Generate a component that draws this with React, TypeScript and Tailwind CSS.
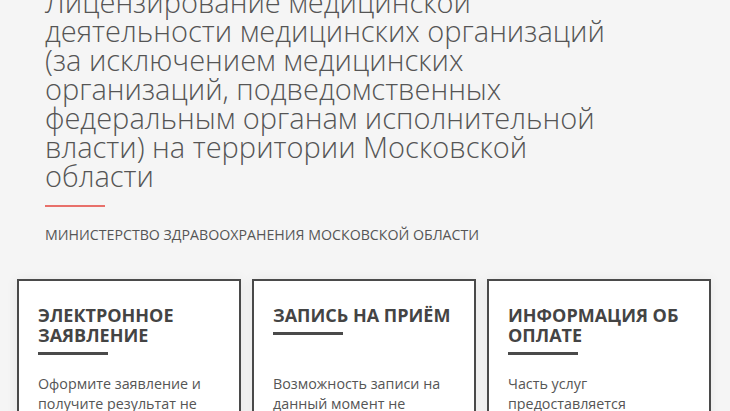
import React from "react";

const cards = [
  {
    title: "Электронное заявление",
    text: "Оформите заявление и получите результат не выходя из дома",
  },
  {
    title: "Запись на приём",
    text: "Возможность записи на данный момент не предоставляется",
  },
  {
    title: "Информация об оплате",
    text: "Часть услуг предоставляется бесплатно",
  },
];

const titleLines = [
  "Лицензирование медицинской",
  "деятельности медицинских организаций",
  "(за исключением медицинских",
  "организаций, подведомственных",
  "федеральным органам исполнительной",
  "власти) на территории Московской",
  "области",
];

export default function App() {
  return (
    <div
      className="h-[411px] w-[730px] overflow-hidden bg-[#f5f5f5]"
      style={{ fontFamily: '"Open Sans", "Liberation Sans", sans-serif' }}
    >
      <div className="px-[45px] -mt-[13px]">
        <h1 className="text-[29px] leading-[29px] font-light text-[#555] whitespace-nowrap">
          {titleLines.map((l) => (
            <div key={l}>{l}</div>
          ))}
        </h1>
        <div className="mt-[15px] h-[2px] w-[60px] bg-[#e8706a]" />
        <div className="mt-[19px] text-[14.2px] leading-[18px] uppercase text-[#555]">
          Министерство здравоохранения Московской области
        </div>
      </div>
      <div className="mt-[35px] flex gap-[11px] px-[17px]">
        {cards.map((c) => (
          <div
            key={c.title}
            className="w-[224px] h-[200px] shrink-0 border-2 border-[#4a4a4a] bg-white px-[19px] pt-[24px] shadow-[0_0_12px_rgba(0,0,0,0.06)]"
          >
            <div className="h-[69px]">
              <h2 className="text-[18px] leading-[20px] font-bold uppercase text-[#444]">
                {c.title}
              </h2>
              <div className="mt-[7px] h-[3px] w-[70px] bg-[#4a4a4a]" />
            </div>
            <p className="text-[14.3px] leading-[20px] text-[#555]">{c.text}</p>
          </div>
        ))}
      </div>
    </div>
  );
}
